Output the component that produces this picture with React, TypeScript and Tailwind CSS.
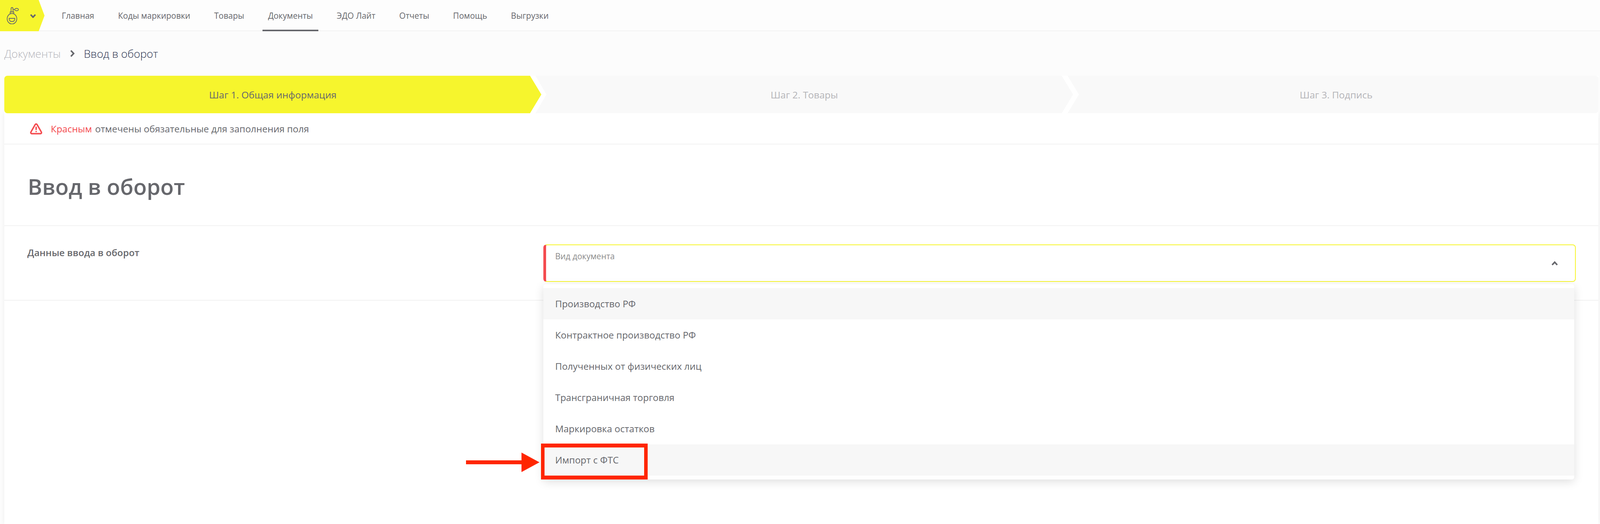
import { TriangleAlert } from "lucide-react";

const navItems = ["Главная", "Коды маркировки", "Товары", "Документы", "ЭДО Лайт", "Отчеты", "Помощь", "Выгрузки"];

const docTypes = [
  "Производство РФ",
  "Контрактное производство РФ",
  "Полученных от физических лиц",
  "Трансграничная торговля",
  "Маркировка остатков",
  "Импорт с ФТС",
];

function PerfumeIcon() {
  return (
    <svg width="31" height="44" viewBox="19 18 34 44" preserveAspectRatio="none" fill="none" stroke="#66676c" strokeWidth="2">
      <circle cx="34" cy="48" r="13.5" />
      <path d="M29 35v-4.5h10V35" />
      <path d="M31.5 30.5V22a2.7 2.7 0 0 1 5.4 0v8.5" />
      <path d="M37 24.5h4.5" />
      <ellipse cx="47" cy="24.5" rx="5.2" ry="3" />
      <path d="M26 47h16c0 5-3 8-5.5 8h-5C29 55 26 52 26 47z" />
    </svg>
  );
}

export default function App() {
  return (
    <div className="relative flex h-[1342px] w-full flex-col overflow-hidden bg-[#fcfcfc] font-['Open_Sans',sans-serif] text-[#66676c]">
      {/* top nav */}
      <header className="flex h-20 items-stretch border-b-2 border-[#f2f2f2] bg-[#fdfdfd]">
        <div className="-mb-[2px] flex h-20 w-[114px] items-center bg-[#f6f52d] pl-[17px] [clip-path:polygon(0_0,99px_0,100%_50%,99px_100%,0_100%)]">
          <PerfumeIcon />
          <svg className="ml-[29px] mt-[1px]" width="15" height="10" viewBox="0 0 15 10" fill="none" stroke="#66676c" strokeWidth="4">
            <path d="M1.5 1.5L7.5 8l6-6.5" />
          </svg>
        </div>
        <nav className="ml-[30px] flex gap-[33px]">
          {navItems.map((item) => (
            <a
              key={item}
              className={
                item === "Документы"
                  ? "-mb-[2px] flex h-20 items-center border-b-4 border-[#66676c] px-[14px] pt-[6px] text-[21px]"
                  : "-mb-[2px] flex h-20 items-center px-[14px] pt-[2px] text-[21px]"
              }
            >
              {item}
            </a>
          ))}
        </nav>
      </header>

      {/* breadcrumb */}
      <div className="flex h-[114px] items-center pl-[11px] text-[28px] font-light">
        <span className="text-[#b5b5bb]">Документы</span>
        <svg className="ml-[24px] mr-[24px]" width="11" height="18" viewBox="0 0 11 18" fill="none" stroke="#66676c" strokeWidth="4">
          <path d="M1.5 1.5L8.5 9l-7 7.5" />
        </svg>
        <span className="text-[#2a3350]">Ввод в оборот</span>
      </div>

      {/* steps */}
      <div className="relative z-10 ml-[11px] mr-1 flex h-24 bg-white text-[24.5px]">
        <div className="flex h-24 w-[33.69%] shrink-0 items-center justify-center rounded-l-lg bg-[#f6f52d] pt-[3px] [clip-path:polygon(0_0,calc(100%-29px)_0,100%_50%,calc(100%-29px)_100%,0_100%)]">
          Шаг 1. Общая информация
        </div>
        <div className="-ml-[15px] flex h-24 w-[33.72%] shrink-0 items-center justify-center bg-[#f9f9f9] pt-[3px] text-[#b4b4b8] [clip-path:polygon(0_0,calc(100%-29px)_0,100%_50%,calc(100%-29px)_100%,0_100%,28px_50%)]">
          Шаг 2. Товары
        </div>
        <div className="-ml-[14px] flex h-24 flex-1 items-center justify-center rounded-r-lg bg-[#f9f9f9] pl-4 pt-[3px] text-[#b4b4b8] [clip-path:polygon(0_0,100%_0,100%_100%,0_100%,29px_50%)]">
          Шаг 3. Подпись
        </div>
      </div>

      {/* card */}
      <div className="ml-[11px] mr-1 flex-1 bg-white shadow-[0_0_12px_rgba(0,0,0,0.06)]">
        <div className="flex h-20 items-center border-b-2 border-[#f2f2f2] pt-[2px] pl-[65px] text-[24px]">
          <TriangleAlert className="mr-[21px] h-9 w-[33px] text-[#f44b4f]" strokeWidth={2.6} />
          <span className="text-[#f44b4f]">Красным</span>
          <span className="ml-[8px]">отмечены обязательные для заполнения поля</span>
        </div>

        <div className="flex h-[209px] items-center border-b-2 border-[#f2f2f2] pl-[60px] pt-[6px]">
          <h1 className="text-[56px] font-semibold">Ввод в оборот</h1>
        </div>

        <div className="flex h-[191px] border-b-2 border-[#f2f2f2]">
          <div className="w-[33.82%] shrink-0 pl-[59px] pt-[50px] text-[24px] font-semibold">Данные ввода в оборот</div>
          <div className="flex-1 pr-[58px] pt-[47px]">
            <div className="relative">
              <div className="relative h-[96px] rounded-lg border-2 border-l-[7px] border-[#f6f52d] border-l-[#f44b4f] pl-[23px] pt-[13px] text-[21px] text-[#8b8b8b]">
                Вид документа
                <svg className="absolute right-[44px] top-[41px]" width="16" height="11" viewBox="0 0 16 11" fill="none" stroke="#66676c" strokeWidth="4">
                  <path d="M1.5 9.5L8 2.5l6.5 7" />
                </svg>
              </div>
              <div className="absolute left-0 right-1 top-[102px] z-20 rounded-md bg-white py-[10px] text-[24px] shadow-[0_6px_24px_rgba(0,0,0,0.13)]">
                {docTypes.map((type, i) => (
                  <div key={type} className={i === 0 || i === 5 ? "relative flex h-20 items-center bg-[#f7f7f7] pl-[30px]" : "relative flex h-20 items-center pl-[30px]"}>
                    {type}
                    {i === 5 && (
                      <>
                        {/* red callout around the last option */}
                        <div className="absolute -left-[6px] -top-[2px] h-[92px] w-[273px] border-x-[9px] border-y-[10px] border-[#ff2600]" />
                        <svg className="absolute -left-[198px] top-[21px]" width="188" height="50" viewBox="0 0 188 50" fill="#ff2600">
                          <path d="M0 20h142V0l46 25-46 25V30H0z" />
                        </svg>
                      </>
                    )}
                  </div>
                ))}
              </div>
            </div>
          </div>
        </div>
      </div>
    </div>
  );
}
